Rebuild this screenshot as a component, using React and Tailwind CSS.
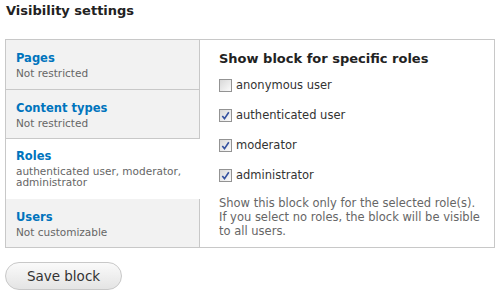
import { useState } from "react";

const tabs = [
  { title: "Pages", summary: "Not restricted" },
  { title: "Content types", summary: "Not restricted" },
  { title: "Roles", summary: "authenticated user, moderator, administrator" },
  { title: "Users", summary: "Not customizable" },
];

const roles = [
  { label: "anonymous user", checked: false },
  { label: "authenticated user", checked: true },
  { label: "moderator", checked: true },
  { label: "administrator", checked: true },
];

function Checkbox({ checked }) {
  return (
    <span className="w-[13px] h-[13px] border border-[#939393] bg-gradient-to-br from-[#d8d8d8] to-[#fbfbfb] flex items-center justify-center shrink-0">
      {checked && (
        <svg width="9" height="9" viewBox="0 0 9 9">
          <path d="M1.3 4.9 L3.5 7.6 L7.8 1.3" fill="none" stroke="#34519f" strokeWidth="1.6" />
        </svg>
      )}
    </span>
  );
}

export default function App() {
  const [active] = useState(2);
  return (
    <div className="w-[500px] h-[295px] bg-white text-[#333] font-['DejaVu_Sans',Verdana,sans-serif]">
      <h2 className="text-[13px] font-bold text-[#222] pl-[6px] pt-[2px] leading-[18px]">
        Visibility settings
      </h2>
      <div className="mx-[5px] mt-[19px] w-[490px] h-[209px] border border-[#c8c8c8] flex">
        <ul className="w-[194px] shrink-0 flex flex-col">
          {tabs.map((t, i) => (
            <li
              key={t.title}
              className={
                i === active
                  ? "bg-white pl-[10px] pr-[8px] pt-[9px] flex-none"
                  : "bg-[#f2f2f2] pl-[10px] pr-[8px] pt-[10px] border-r border-[#c8c8c8] border-b border-b-[#c8c8c8] last:border-b-0 flex-none"
              }
              style={{ height: [50, 49, 60, 48][i] }}
            >
              <div className="text-[11.5px] font-bold text-[#0074bd] leading-[16px]">{t.title}</div>
              <div className="text-[10.5px] text-[#666] leading-[11px] mt-[2px]">{t.summary}</div>
            </li>
          ))}
        </ul>
        <div className="flex-1 pl-[19px] pt-[10px]">
          <h3 className="text-[13px] font-bold text-[#222] leading-[18px]">
            Show block for specific roles
          </h3>
          <div className="flex flex-col gap-[17px] mt-[11px]">
            {roles.map((r) => (
              <label key={r.label} className="flex items-center gap-[4px] text-[11.5px] text-[#333] leading-[13px]">
                <Checkbox checked={r.checked} />
                {r.label}
              </label>
            ))}
          </div>
          <p className="text-[11.5px] text-[#666] leading-[14px] mt-[14px]">
            Show this block only for the selected role(s).
            <br />
            If you select no roles, the block will be visible
            <br />
            to all users.
          </p>
        </div>
      </div>
      <button className="ml-[5px] mt-[14px] w-[117px] h-[28px] rounded-full border border-[#c8c8c8] bg-gradient-to-b from-[#fafafa] to-[#e4e4e4] text-[13.5px] text-[#333] leading-[26px]">
        Save block
      </button>
    </div>
  );
}
